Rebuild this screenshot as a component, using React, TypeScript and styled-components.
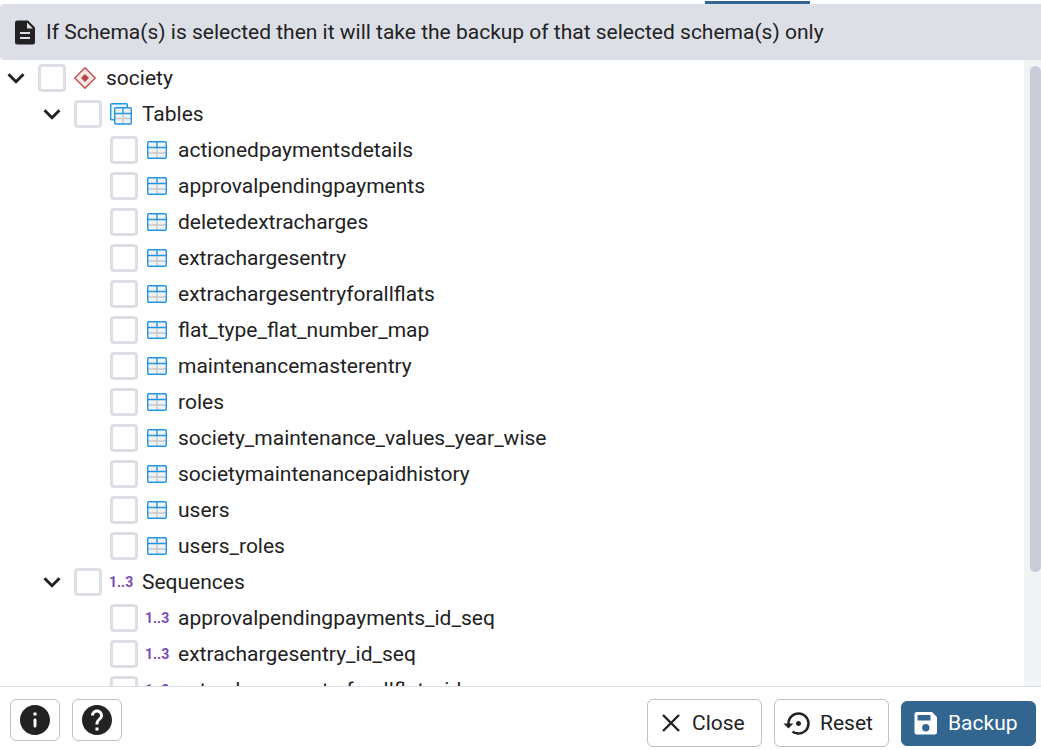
import React from 'react';
import styled, { createGlobalStyle } from 'styled-components';

const GlobalStyle = createGlobalStyle`
  *, *::before, *::after { box-sizing: border-box; }
  body {
    margin: 0;
    background: #fff;
    color: #222;
    font-family: Roboto, "Liberation Sans", sans-serif;
    font-size: 21px;
    line-height: 24px;
  }
  svg { display: block; flex: none; }
`;

const Dialog = styled.main`
  display: flex;
  flex-direction: column;
  height: 100vh;
  overflow: hidden;
`;

const TabStrip = styled.div`
  display: flex;
  justify-content: flex-end;
  align-items: flex-end;
  flex: none;
  height: 4px;
  padding-right: 231px;
`;

const TabIndicator = styled.span`
  width: 105px;
  height: 3px;
  background: #326690;
`;

const Notice = styled.div`
  display: flex;
  align-items: center;
  flex: none;
  gap: 8px;
  height: 56px;
  padding: 0 12px;
  border-radius: 4px 0 0 4px;
  background: #dddfe7;
`;

const TreeArea = styled.div`
  display: flex;
  flex: 1;
  min-height: 0;
`;

const Tree = styled.ul`
  flex: 1;
  min-width: 0;
  margin: 0;
  padding: 0;
  overflow: hidden;
  list-style: none;
`;

const Row = styled.li<{ $level: number }>`
  display: flex;
  align-items: center;
  height: 36px;
  padding-left: ${(p) => p.$level * 36 + 4}px;
`;

const Expander = styled.button`
  width: 24px;
  height: 24px;
  margin-right: 10px;
  padding: 0;
  border: 0;
  background: none;
  color: inherit;
`;

const ExpanderSpace = styled.span`
  width: 24px;
  margin-right: 10px;
`;

const Check = styled.input`
  appearance: none;
  flex: none;
  width: 28px;
  height: 28px;
  margin: 0 7px 0 0;
  border: 3px solid #dddfe7;
  border-radius: 4px;
  background: #fff;
  &:checked { background: #326690; }
`;

const RowLabel = styled.label`
  display: flex;
  align-items: center;
  gap: 9px;
  white-space: nowrap;
`;

const SequenceMark = styled.span`
  width: 24px;
  color: #7849b8;
  font-size: 14px;
  font-weight: 700;
`;

const ScrollTrack = styled.div`
  flex: none;
  width: 17px;
  padding: 6px 0 0 6px;
  background: #f1f3f4;
`;

const ScrollThumb = styled.div`
  height: 506px;
  max-height: 100%;
  border-radius: 6px;
  background: #c9cdd9;
`;

const Footer = styled.footer`
  display: flex;
  justify-content: space-between;
  align-items: flex-start;
  flex: none;
  padding: 12px 5px 3px 10px;
  border-top: 1px solid #dddfe7;
`;

const ButtonGroup = styled.div`
  display: flex;
  align-items: center;
  gap: 12px;
`;

const Button = styled.button<{ $primary?: boolean }>`
  display: flex;
  align-items: center;
  justify-content: flex-start;
  gap: 8px;
  min-width: ${(p) => (p.$primary ? 135 : 115)}px;
  height: ${(p) => (p.$primary ? 45 : 48)}px;
  padding: 0 10px;
  border: 1px solid ${(p) => (p.$primary ? '#326690' : '#bac1cd')};
  border-radius: 6px;
  background: ${(p) => (p.$primary ? '#326690' : '#fff')};
  color: ${(p) => (p.$primary ? '#fff' : '#222')};
  font: inherit;
`;

const IconButton = styled(Button)`
  justify-content: center;
  min-width: 50px;
  height: 42px;
  padding: 0;
`;

const ChevronIcon = () => (
  <svg width="24" height="24" viewBox="0 0 24 24" fill="none" stroke="#222" strokeWidth="3">
    <path d="M4.500 8.200 12 15.700l7.500-7.500" />
  </svg>
);

const NoteIcon = () => (
  <svg width="26" height="28" viewBox="0 0 26 28">
    <path fill="#222" fillRule="evenodd" d="M5.500 2.500h10.500l7 7v14.500a2.500 2.500 0 0 1-2.500 2.500h-15A2.500 2.500 0 0 1 3 24V5a2.500 2.500 0 0 1 2.500-2.500ZM15 4.500V10.500H21ZM8 14v2h10v-2ZM8 19v2h10v-2Z" />
  </svg>
);

const SchemaIcon = () => (
  <svg width="24" height="24" viewBox="0 0 24 24">
    <path d="M12 1.800 22.200 12 12 22.200 1.800 12Z" fill="#fbeaea" stroke="#c74b4b" strokeWidth="1.400" strokeLinejoin="round" />
    <path d="M12 8 16 12 12 16 8 12Z" fill="#c0403f" />
  </svg>
);

const TableIcon = () => (
  <svg width="24" height="24" viewBox="0 0 24 24" fill="none">
    <rect x="2.700" y="3.700" width="18.600" height="16.600" rx="1" fill="#f2f2f2" />
    <path d="M3 15h18M12 10v10" stroke="#c3c9d0" strokeWidth="1.400" />
    <path d="M3 9.500h18M12 4v6" stroke="#2196e3" strokeWidth="1.400" />
    <rect x="2.700" y="3.700" width="18.600" height="16.600" rx="1" stroke="#2196e3" strokeWidth="1.400" />
  </svg>
);

const TablesIcon = () => (
  <svg width="24" height="24" viewBox="0 0 24 24" fill="none">
    <rect x="1.700" y="1.700" width="16.600" height="16" rx="1" fill="#e9f5fd" stroke="#2196e3" strokeWidth="1.400" />
    <rect x="5.700" y="5.700" width="16.600" height="16.300" rx="1" fill="#f2f2f2" />
    <path d="M6 16.500h16M14 11v11" stroke="#c3c9d0" strokeWidth="1.400" />
    <path d="M6 11.500h16M14 6v5" stroke="#2196e3" strokeWidth="1.400" />
    <rect x="5.700" y="5.700" width="16.600" height="16.300" rx="1" stroke="#2196e3" strokeWidth="1.400" />
  </svg>
);

const InfoIcon = () => (
  <svg width="36" height="36" viewBox="0 0 24 24" fill="#222">
    <path d="M12 2C6.480 2 2 6.480 2 12s4.480 10 10 10 10-4.480 10-10S17.520 2 12 2zm1 14c0 .55-.45 1-1 1s-1-.45-1-1v-4c0-.55.45-1 1-1s1 .45 1 1v4zm0-7h-2V7h2v2z" />
  </svg>
);

const HelpIcon = () => (
  <svg width="36" height="36" viewBox="0 0 24 24" fill="#222">
    <path d="M12 2C6.480 2 2 6.480 2 12s4.480 10 10 10 10-4.480 10-10S17.520 2 12 2zm1 17h-2v-2h2v2zm2.070-7.750-.9.920C13.450 12.900 13 13.500 13 15h-2v-.5c0-1.100.45-2.100 1.170-2.830l1.240-1.260c.37-.36.59-.86.59-1.410 0-1.100-.9-2-2-2s-2 .9-2 2H8c0-2.210 1.790-4 4-4s4 1.790 4 4c0 .88-.36 1.680-.93 2.250z" />
  </svg>
);

const CloseIcon = () => (
  <svg width="26" height="26" viewBox="0 0 26 26" fill="none" stroke="#222" strokeWidth="2.400">
    <path d="m5 5 16 16M21 5 5 21" />
  </svg>
);

const ResetIcon = () => (
  <svg width="27" height="27" viewBox="1.250 1.250 21.500 21.500" fill="#222" overflow="visible">
    <path d="M14 12c0-1.100-.9-2-2-2s-2 .9-2 2 .9 2 2 2 2-.9 2-2zm-2-9a9 9 0 0 0-9 9H0l4 4 4-4H5a7 7 0 1 1 2.940 5.700l-1.420 1.440A9 9 0 1 0 12 3z" />
  </svg>
);

const SaveIcon = () => (
  <svg width="28" height="28" viewBox="0 0 28 28">
    <path fill="#fff" fillRule="evenodd" d="M5 3h15l5 5v15a2.500 2.500 0 0 1-2.500 2.500H5A2.500 2.500 0 0 1 2.500 23V5.500A2.500 2.500 0 0 1 5 3ZM5.500 6v5.500h13V6ZM13.800 15a3.700 3.700 0 1 0 0 7.400 3.700 3.700 0 0 0 0-7.400Z" />
  </svg>
);

type Kind = 'schema' | 'tables' | 'table' | 'sequence';
interface TreeNode { name: string; kind: Kind; level: number; open?: boolean }

const tables = [
  'actionedpaymentsdetails', 'approvalpendingpayments', 'deletedextracharges',
  'extrachargesentry', 'extrachargesentryforallflats', 'flat_type_flat_number_map',
  'maintenancemasterentry', 'roles', 'society_maintenance_values_year_wise',
  'societymaintenancepaidhistory', 'users', 'users_roles',
];
const sequences = [
  'approvalpendingpayments_id_seq', 'extrachargesentry_id_seq', 'extrachargesentryforallflats_id_seq',
];

const nodes: TreeNode[] = [
  { name: 'society', kind: 'schema', level: 0, open: true },
  { name: 'Tables', kind: 'tables', level: 1, open: true },
  ...tables.map((name): TreeNode => ({ name, kind: 'table', level: 2 })),
  { name: 'Sequences', kind: 'sequence', level: 1, open: true },
  ...sequences.map((name): TreeNode => ({ name, kind: 'sequence', level: 2 })),
];

const NodeIcon = ({ kind }: { kind: Kind }) => {
  if (kind === 'schema') return <SchemaIcon />;
  if (kind === 'tables') return <TablesIcon />;
  if (kind === 'table') return <TableIcon />;
  return <SequenceMark aria-hidden="true">1..3</SequenceMark>;
};

const NodeRow = ({ node }: { node: TreeNode }) => {
  const id = `node-${node.name}`;
  return (
    <Row $level={node.level}>
      {node.open ? (
        <Expander type="button" aria-label={`Collapse ${node.name}`} aria-expanded="true"><ChevronIcon /></Expander>
      ) : (
        <ExpanderSpace />
      )}
      <Check type="checkbox" id={id} />
      <RowLabel htmlFor={id}>
        <NodeIcon kind={node.kind} />
        {node.name}
      </RowLabel>
    </Row>
  );
};

export default function App() {
  return (
    <>
      <GlobalStyle />
      <Dialog>
        <TabStrip><TabIndicator /></TabStrip>
        <Notice>
          <NoteIcon />
          <span>If Schema(s) is selected then it will take the backup of that selected schema(s) only</span>
        </Notice>
        <TreeArea>
          <Tree>
            {nodes.map((node) => <NodeRow key={node.name} node={node} />)}
          </Tree>
          <ScrollTrack><ScrollThumb /></ScrollTrack>
        </TreeArea>
        <Footer>
          <ButtonGroup>
            <IconButton type="button" aria-label="Information"><InfoIcon /></IconButton>
            <IconButton type="button" aria-label="Help"><HelpIcon /></IconButton>
          </ButtonGroup>
          <ButtonGroup>
            <Button type="button"><CloseIcon />Close</Button>
            <Button type="button"><ResetIcon />Reset</Button>
            <Button type="button" $primary><SaveIcon />Backup</Button>
          </ButtonGroup>
        </Footer>
      </Dialog>
    </>
  );
}
